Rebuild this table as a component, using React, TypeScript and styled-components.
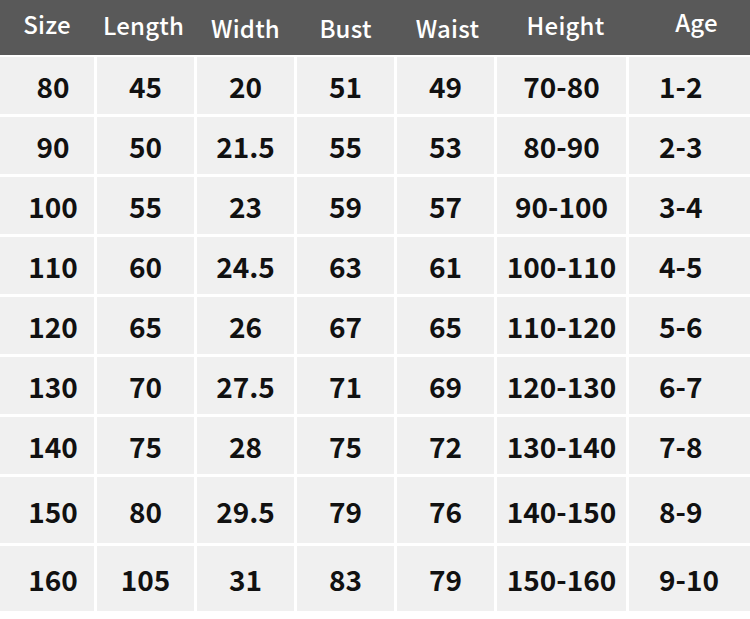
import styled, { createGlobalStyle } from "styled-components"

const headers = [
  { label: "Size", lift: 4, dx: 0 },
  { label: "Length", lift: 3, dx: -2 },
  { label: "Width", lift: 0, dx: 0 },
  { label: "Bust", lift: 0, dx: 0 },
  { label: "Waist", lift: 0, dx: 2 },
  { label: "Height", lift: 3, dx: 4 },
  { label: "Age", lift: 6, dx: 7 },
]

const rows = [
  ["80", "45", "20", "51", "49", "70-80", "1-2"],
  ["90", "50", "21.5", "55", "53", "80-90", "2-3"],
  ["100", "55", "23", "59", "57", "90-100", "3-4"],
  ["110", "60", "24.5", "63", "61", "100-110", "4-5"],
  ["120", "65", "26", "67", "65", "110-120", "5-6"],
  ["130", "70", "27.5", "71", "69", "120-130", "6-7"],
  ["140", "75", "28", "75", "72", "130-140", "7-8"],
  ["150", "80", "29.5", "79", "76", "140-150", "8-9"],
  ["160", "105", "31", "83", "79", "150-160", "9-10"],
]

// last two rows are taller in the original chart
const rowHeights = [57, 57, 57, 57, 57, 57, 57, 66, 65]

const COLUMNS = "94px 97px 97px 97px 97px 129px 1fr"

const GlobalStyle = createGlobalStyle`
  html, body {
    margin: 0;
    padding: 0;
    background: #ffffff;
  }
  body {
    font-family: "Noto Sans CJK SC", "Noto Sans", sans-serif;
  }
`

const Chart = styled.div`
  width: 750px;
  height: 619px;
  display: flex;
  flex-direction: column;
  gap: 2px;
  background: #ffffff;
`

const HeaderRow = styled.div`
  display: grid;
  grid-template-columns: ${COLUMNS};
  column-gap: 3px;
  height: 55px;
  background: #595959;
`

const HeaderCell = styled.div<{ $lift: number; $dx: number }>`
  display: flex;
  align-items: center;
  justify-content: center;
  padding-bottom: ${(p) => p.$lift * 2}px;
  padding-left: ${(p) => Math.max(p.$dx, 0) * 2}px;
  padding-right: ${(p) => Math.max(-p.$dx, 0) * 2}px;
  color: #ffffff;
  font-size: 24px;
  font-weight: 500;
  letter-spacing: 0.2px;
`

const Body = styled.div`
  display: flex;
  flex-direction: column;
  gap: 3px;
`

const Row = styled.div`
  display: grid;
  grid-template-columns: ${COLUMNS};
  column-gap: 3px;
`

const Cell = styled.div<{ $first?: boolean; $age?: boolean }>`
  display: flex;
  align-items: center;
  justify-content: ${(p) => (p.$age ? "flex-start" : "center")};
  padding-top: 1px;
  padding-left: ${(p) => (p.$first ? 12 : p.$age ? 30 : 0)}px;
  background: #f0f0f0;
  color: #111111;
  font-size: 28px;
  font-weight: 700;
`

export default function App() {
  return (
    <>
      <GlobalStyle />
      <Chart>
        <HeaderRow>
          {headers.map((h) => (
            <HeaderCell key={h.label} $lift={h.lift} $dx={h.dx}>
              {h.label}
            </HeaderCell>
          ))}
        </HeaderRow>
        <Body>
          {rows.map((row, i) => (
            <Row key={row[0]} style={{ height: rowHeights[i] }}>
              {row.map((value, j) => (
                <Cell key={j} $first={j === 0} $age={j === 6}>
                  {value}
                </Cell>
              ))}
            </Row>
          ))}
        </Body>
      </Chart>
    </>
  )
}
